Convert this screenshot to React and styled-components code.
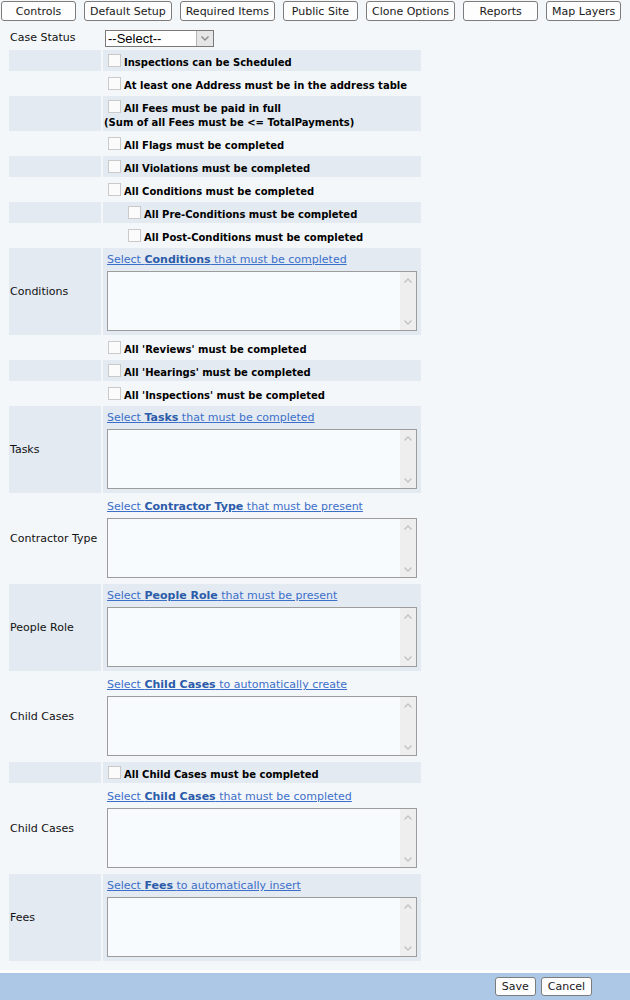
import React from "react";
import styled, { createGlobalStyle } from "styled-components";

const GlobalStyle = createGlobalStyle`
  html, body {
    margin: 0;
    padding: 0;
    background: #f4f7fa;
  }
  body {
    font-family: "DejaVu Sans", Verdana, sans-serif;
    font-size: 11px;
    color: #000;
  }
`;

const tabs = [
  "Controls",
  "Default Setup",
  "Required Items",
  "Public Site",
  "Clone Options",
  "Reports",
  "Map Layers",
];

const Page = styled.div`
  width: 630px;
  min-height: 1000px;
  display: flex;
  flex-direction: column;
`;

const TabBar = styled.div`
  display: flex;
  gap: 8px;
  padding: 1px 0 0 1px;
`;

const Button = styled.button`
  height: ${(p) => (p.$small ? "19px" : "20px")};
  min-width: ${(p) => (p.$small ? "0" : "75px")};
  padding: 0 ${(p) => (p.$small ? "6px" : "5px")};
  border: 1px solid #7c7c7c;
  border-radius: 3px;
  background: #fdfdfd;
  font-family: "DejaVu Sans", Verdana, sans-serif;
  font-size: 11px;
  color: #1a1a1a;
  white-space: nowrap;
  cursor: pointer;
`;

const Grid = styled.div`
  display: grid;
  grid-template-columns: 92px 318px;
  gap: 2px;
  margin: 6px 0 0 9px;
`;

const Label = styled.div`
  display: flex;
  align-items: center;
  padding: 0 1px;
  min-height: 21px;
  background: ${(p) => (p.$shaded ? "#e3eaf1" : "transparent")};
  color: #111;
`;

const Value = styled.div`
  display: flex;
  flex-direction: column;
  justify-content: center;
  padding: ${(p) => (p.$box ? "4px" : "1px")};
  min-height: 19px;
  background: ${(p) => (p.$shaded ? "#e3eaf1" : "transparent")};
`;

const CheckLine = styled.label`
  display: flex;
  align-items: flex-end;
  height: 19px;
  font-size: 10px;
  font-weight: bold;
  color: #000;
  white-space: nowrap;

  span {
    line-height: 12px;
    padding-bottom: 1px;
  }
`;

const Check = styled.input.attrs({ type: "checkbox" })`
  appearance: none;
  width: 13px;
  height: 13px;
  margin: 3px 3px 3px ${(p) => (p.$indent ? "24px" : "4px")};
  border: 1px solid #cacaca;
  background: #fbfbfb;
  flex: none;
`;

const Note = styled.div`
  font-size: 10px;
  font-weight: bold;
  line-height: 14px;
  white-space: nowrap;
`;

const SelectBox = styled.div`
  display: flex;
  align-items: stretch;
  width: 107px;
  height: 15px;
  margin: 2px 0 0 1px;
  border: 1px solid #7a7a7a;
  background: #fff;
  font-family: "Liberation Sans", Arial, sans-serif;
  font-size: 13px;
`;

const SelectText = styled.span`
  flex: 1;
  padding-left: 2px;
  line-height: 15px;
`;

const SelectArrow = styled.span`
  width: 16px;
  border-left: 1px solid #b5b5b5;
  background: #e6e6e6;
  display: flex;
  align-items: center;
  justify-content: center;
`;

const Link = styled.a`
  display: block;
  height: 16px;
  line-height: 16px;
  margin-bottom: 3px;
  color: #3c6fc9;
  text-decoration: underline;
  white-space: nowrap;
  cursor: pointer;
  b {
    color: #2b5ba9;
  }
`;

const ListBox = styled.div`
  display: flex;
  width: 308px;
  height: 58px;
  border: 1px solid #9c9c9c;
  background: #f8fbfe;
`;

const ListArea = styled.div`
  flex: 1;
`;

const ScrollCol = styled.div`
  width: 16px;
  background: #eeeeee;
  display: flex;
  flex-direction: column;
  justify-content: space-between;
  align-items: center;
  padding: 6px 0 5px;
`;

const Footer = styled.div`
  margin-top: auto;
  border-top: 3px solid #ffffff;
  height: 30px;
  background: #adc8e6;
  display: flex;
  justify-content: flex-end;
  align-items: flex-start;
  gap: 5px;
  padding: 4px 38px 0 0;
  box-sizing: border-box;
`;

const Chevron = ({ up, color = "#c2c2c2" }) => (
  <svg width="8" height="5" viewBox="0 0 8 5">
    <path
      d={up ? "M0.5 4.5 L4 1 L7.5 4.5" : "M0.5 0.5 L4 4 L7.5 0.5"}
      fill="none"
      stroke={color}
      strokeWidth="1.3"
    />
  </svg>
);

const CheckRow = ({ shaded, indent, children }) => (
  <>
    <Label $shaded={shaded} />
    <Value $shaded={shaded}>
      <CheckLine>
        <Check $indent={indent} />
        <span>{children}</span>
      </CheckLine>
    </Value>
  </>
);

const PickRow = ({ shaded, label, pre = "Select", bold, rest }) => (
  <>
    <Label $shaded={shaded}>{label}</Label>
    <Value $shaded={shaded} $box>
      <Link>
        {pre} <b>{bold}</b> {rest}
      </Link>
      <ListBox>
        <ListArea />
        <ScrollCol>
          <Chevron up />
          <Chevron />
        </ScrollCol>
      </ListBox>
    </Value>
  </>
);

export default function App() {
  return (
    <Page>
      <GlobalStyle />
      <TabBar>
        {tabs.map((t) => (
          <Button key={t}>{t}</Button>
        ))}
      </TabBar>

      <Grid>
        <Label>Case Status</Label>
        <Value>
          <SelectBox>
            <SelectText>--Select--</SelectText>
            <SelectArrow>
              <Chevron color="#8a8a8a" />
            </SelectArrow>
          </SelectBox>
        </Value>

        <CheckRow shaded>Inspections can be Scheduled</CheckRow>
        <CheckRow>At least one Address must be in the address table</CheckRow>

        <Label $shaded />
        <Value $shaded>
          <CheckLine>
            <Check />
            <span>All Fees must be paid in full</span>
          </CheckLine>
          <Note>(Sum of all Fees must be &lt;= TotalPayments)</Note>
        </Value>

        <CheckRow>All Flags must be completed</CheckRow>
        <CheckRow shaded>All Violations must be completed</CheckRow>
        <CheckRow>All Conditions must be completed</CheckRow>
        <CheckRow shaded indent>
          All Pre-Conditions must be completed
        </CheckRow>
        <CheckRow indent>All Post-Conditions must be completed</CheckRow>

        <PickRow shaded label="Conditions" bold="Conditions" rest="that must be completed" />

        <CheckRow>All 'Reviews' must be completed</CheckRow>
        <CheckRow shaded>All 'Hearings' must be completed</CheckRow>
        <CheckRow>All 'Inspections' must be completed</CheckRow>

        <PickRow shaded label="Tasks" bold="Tasks" rest="that must be completed" />
        <PickRow label="Contractor Type" bold="Contractor Type" rest="that must be present" />
        <PickRow shaded label="People Role" bold="People Role" rest="that must be present" />
        <PickRow label="Child Cases" bold="Child Cases" rest="to automatically create" />

        <CheckRow shaded>All Child Cases must be completed</CheckRow>

        <PickRow label="Child Cases" bold="Child Cases" rest="that must be completed" />
        <PickRow shaded label="Fees" bold="Fees" rest="to automatically insert" />
      </Grid>

      <Footer>
        <Button $small>Save</Button>
        <Button $small>Cancel</Button>
      </Footer>
    </Page>
  );
}
